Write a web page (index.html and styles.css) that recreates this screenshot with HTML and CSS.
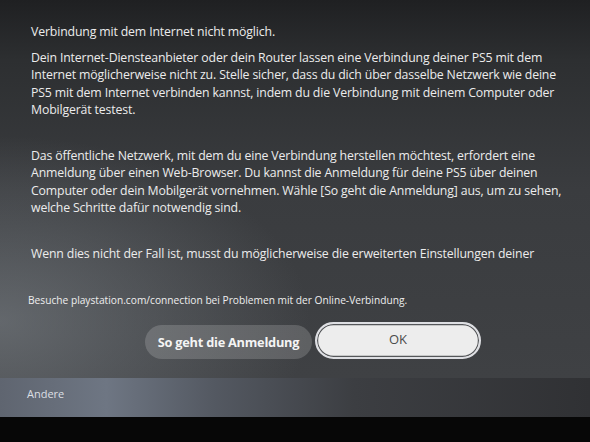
FILE: index.html
```html
<!DOCTYPE html>
<html lang="de">
<head>
<meta charset="utf-8">
<title>Verbindung mit dem Internet nicht möglich</title>
<link rel="stylesheet" href="styles.css">
</head>
<body>
<div class="screen">
  <section class="dialog">
    <div class="message">
      <p class="title">Verbindung mit dem Internet nicht möglich.</p>
      <p>Dein Internet-Diensteanbieter oder dein Router lassen eine Verbindung deiner PS5 mit dem Internet möglicherweise nicht zu. Stelle sicher, dass du dich über dasselbe Netzwerk wie deine PS5 mit dem Internet verbinden kannst, indem du die Verbindung mit deinem Computer oder Mobilgerät testest.</p>
      <p>Das öffentliche Netzwerk, mit dem du eine Verbindung herstellen möchtest, erfordert eine Anmeldung über einen Web-Browser. Du kannst die Anmeldung für deine PS5 über deinen Computer oder dein Mobilgerät vornehmen. Wähle [So geht die Anmeldung] aus, um zu sehen, welche Schritte dafür notwendig sind.</p>
      <p>Wenn dies nicht der Fall ist, musst du möglicherweise die erweiterten Einstellungen deiner</p>
    </div>
    <p class="help">Besuche playstation.com/connection bei Problemen mit der Online-Verbindung.</p>
    <div class="actions">
      <button class="btn btn-secondary">So geht die Anmeldung</button>
      <button class="btn btn-primary">OK</button>
    </div>
  </section>
  <footer class="menu-bar">
    <span class="menu-item">Andere</span>
  </footer>
  <div class="bezel"></div>
</div>
</body>
</html>
```

FILE: styles.css
```css
html, body {
  margin: 0;
  padding: 0;
  background: #050505;
}

.screen {
  width: 590px;
  height: 442px;
  display: flex;
  flex-direction: column;
  overflow: hidden;
  font-family: "Open Sans", "Noto Sans", sans-serif;
  color: #ececec;
}

/* dialog surface with the soft light falling in from the lower left */
.dialog {
  height: 378px;
  display: flex;
  flex-direction: column;
  box-sizing: border-box;
  padding: 23px 0 0 31px;
  background:
    radial-gradient(ellipse 75% 70% at 0% 85%, rgba(130, 136, 142, 0.55), rgba(130, 136, 142, 0) 70%),
    linear-gradient(180deg, #1f2022 0%, #2d2f31 16%, #3a3c3f 50%, #3f4144 100%);
}

.message {
  width: 545px;
  height: 242px;
  font-size: 12.3px;
  line-height: 17.5px;
  letter-spacing: -0.15px;
}

.message p {
  margin: 0 0 28px;
}

.message .title {
  margin-bottom: 8px;
}

.help {
  margin: 28px 0 0 -3px;
  font-size: 10.2px;
  line-height: 14px;
  color: #eeeeee;
}

.actions {
  display: flex;
  gap: 3px;
  margin: 14px 0 0 114px;
  align-items: center;
}

.btn {
  font-family: "Open Sans", "Noto Sans", sans-serif;
  border-radius: 20px;
  cursor: pointer;
  padding: 0;
}

.btn-secondary {
  width: 167px;
  height: 34px;
  border: none;
  background: rgba(255, 255, 255, 0.17);
  color: #f4f4f4;
  font-size: 12.8px;
  letter-spacing: -0.25px;
  font-weight: 700;
  margin-top: 4px;
}

.btn-primary {
  width: 166px;
  height: 37px;
  border: 2px solid #dedfe3;
  box-shadow: inset 0 0 0 1.2px #55575a;
  background: #ededed;
  color: #4b4b4b;
  font-size: 13px;
  font-weight: 400;
  padding-bottom: 3px;
}

/* bottom menu strip */
.menu-bar {
  height: 39px;
  box-sizing: border-box;
  display: flex;
  align-items: flex-start;
  padding: 8px 0 0 27px;
  background: linear-gradient(90deg, #5f6570 0%, #6e7683 18%, #545962 36%, #3c3e42 60%, #303134 100%);
}

.menu-item {
  font-size: 11px;
  line-height: 15px;
  color: #dcdfe4;
}

.bezel {
  flex: 1;
  background: #070707;
}
```
